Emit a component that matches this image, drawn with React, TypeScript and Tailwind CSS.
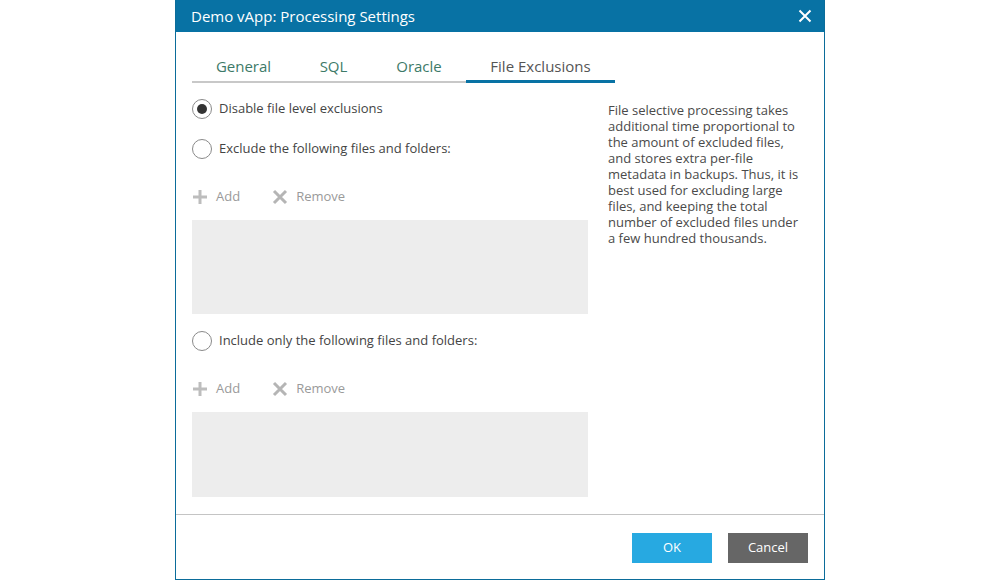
import React, { useState } from 'react';

const tabs = [
  { label: 'General', w: 'w-[103px]' },
  { label: 'SQL', w: 'w-[77px]' },
  { label: 'Oracle', w: 'w-[94px]' },
  { label: 'File Exclusions', w: 'w-[149px]' },
];

const Radio: React.FC<{ checked: boolean; label: string; onClick: () => void }> = ({ checked, label, onClick }) => (
  <div className="flex items-center h-5 cursor-pointer" onClick={onClick}>
    <div className="w-5 h-5 rounded-full border border-[#8a8a8a] flex items-center justify-center bg-white">
      {checked && <div className="w-[10px] h-[10px] rounded-full bg-[#333333]" />}
    </div>
    <span className="ml-[7px] text-[13px] text-[#444444]">{label}</span>
  </div>
);

const Toolbar: React.FC = () => (
  <div className="flex items-center h-5 mt-7 text-[13px] text-[#9a9a9a]">
    <svg width="14" height="14" viewBox="0 0 14 14" className="ml-[1px]">
      <rect x="5.5" y="0" width="3" height="14" fill="#bdbdbd" />
      <rect x="0" y="5.5" width="14" height="3" fill="#bdbdbd" />
    </svg>
    <span className="ml-[9px]">Add</span>
    <svg width="16" height="16" viewBox="0 0 16 16" className="ml-[32px]">
      <path d="M2 2 L14 14 M14 2 L2 14" stroke="#b5b5b5" strokeWidth="3" />
    </svg>
    <span className="ml-[8px]">Remove</span>
  </div>
);

export default function App() {
  const [mode, setMode] = useState(0);
  return (
    <div className="w-full h-[580px] bg-white flex justify-center" style={{ fontFamily: '"Open Sans", sans-serif' }}>
      <div className="w-[650px] h-[580px] border-x border-b border-[#0b6c9a] flex flex-col">
        <div className="h-8 bg-[#0872a4] flex items-center justify-between pl-[15px] pr-[12px] text-white">
          <span className="text-[15px]">Demo vApp: Processing Settings</span>
          <svg width="14" height="14" viewBox="0 0 14 14">
            <path d="M1.5 1.5 L12.5 12.5 M12.5 1.5 L1.5 12.5" stroke="#ffffff" strokeWidth="2" />
          </svg>
        </div>

        <div className="h-[482px] px-4">
          <div className="pt-[17px]">
            <div className="flex w-[423px] border-b-2 border-[#c8c8c8] h-[34px]">
              {tabs.map((t, i) => (
                <div
                  key={t.label}
                  className={
                    i === 3
                      ? `${t.w} text-[15px] text-[#555555] flex justify-center items-start pt-[6px] border-b-[3px] border-[#0872a4] -mb-[2px]`
                      : `${t.w} text-[15px] text-[#3d7a68] flex justify-center items-start pt-[6px]`
                  }
                >
                  {t.label}
                </div>
              ))}
            </div>
          </div>

          <div className="flex">
            <div className="w-[396px]">
              <div className="mt-4">
                <Radio checked={mode === 0} label="Disable file level exclusions" onClick={() => setMode(0)} />
              </div>
              <div className="mt-5">
                <Radio checked={mode === 1} label="Exclude the following files and folders:" onClick={() => setMode(1)} />
              </div>
              <Toolbar />
              <div className="mt-[13px] h-[94px] bg-[#ededed]" />
              <div className="mt-[17px]">
                <Radio checked={mode === 2} label="Include only the following files and folders:" onClick={() => setMode(2)} />
              </div>
              <Toolbar />
              <div className="mt-[13px] h-[85px] bg-[#ededed]" />
            </div>
            <p className="ml-5 mt-[19px] w-[200px] text-[13px] leading-4 text-[#4a4a4a]">
              File selective processing takes additional time proportional to the amount of excluded files, and stores extra per-file metadata in backups. Thus, it is best used for excluding large files, and keeping the total number of excluded files under a few hundred thousands.
            </p>
          </div>
        </div>

        <div className="flex-1 border-t border-[#c4c4c4] flex justify-end items-start pt-[18px] pr-4 gap-4">
          <button className="w-20 h-[30px] bg-[#27a9e1] text-white text-[13px]">OK</button>
          <button className="w-20 h-[30px] bg-[#666666] text-white text-[13px]">Cancel</button>
        </div>
      </div>
    </div>
  );
}
